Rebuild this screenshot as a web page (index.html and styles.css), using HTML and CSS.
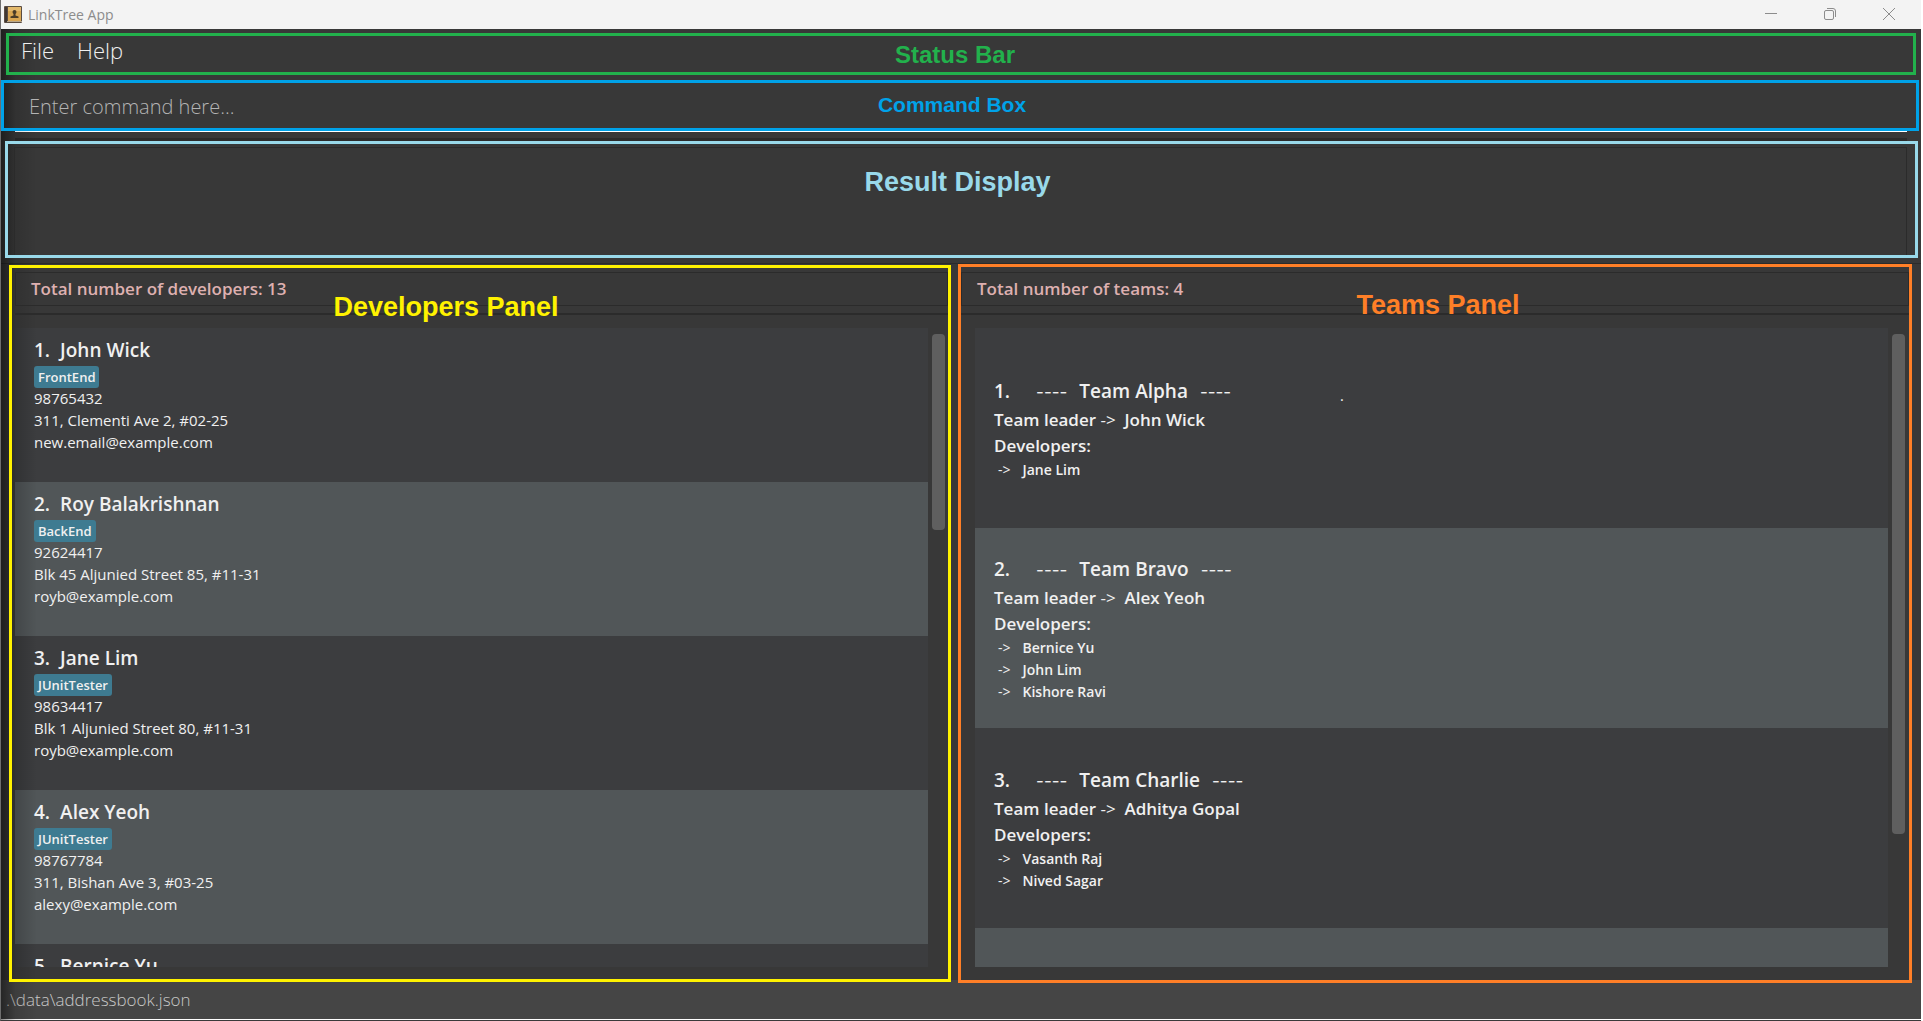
FILE: index.html
```html
<!DOCTYPE html>
<html lang="en">
<head>
<meta charset="utf-8">
<title>LinkTree App</title>
<link rel="stylesheet" href="styles.css">
</head>
<body>
<div class="window">
  <header class="titlebar">
    <svg class="app-icon" viewBox="0 0 18 17" aria-hidden="true">
      <rect x="0" y="0" width="18" height="17" rx="1" fill="#5a4c42"/>
      <rect x="1" y="1" width="2" height="15" fill="#3f3733"/>
      <rect x="4" y="1" width="13" height="14" fill="#d9a652"/>
      <rect x="4" y="1" width="13" height="4" fill="#e3b96c"/>
      <rect x="3" y="15" width="15" height="1" fill="#b9a88c"/>
      <circle cx="10.500" cy="6" r="2" fill="#4a3c28"/>
      <path d="M9.500 7h2v2.500l3 1V12h-8v-1.500l3-1z" fill="#4a3c28"/>
    </svg>
    <h1 class="app-title">LinkTree App</h1>
    <div class="window-controls">
      <button type="button" aria-label="Minimize"><svg viewBox="0 0 12 12"><path d="M0 5.500h12"/></svg></button>
      <button type="button" aria-label="Restore"><svg viewBox="0 0 12 12"><rect x=".5" y="2.500" width="9" height="9" rx="1.500"/><path d="M3 .5h6a2.500 2.500 0 0 1 2.500 2.500v6"/></svg></button>
      <button type="button" aria-label="Close"><svg viewBox="0 0 12 12"><path d="M0 0l12 12M12 0L0 12"/></svg></button>
    </div>
  </header>

  <nav class="region status-region">
    <button type="button" class="menu-item">File</button>
    <button type="button" class="menu-item">Help</button>
    <span class="caption">Status Bar</span>
  </nav>

  <section class="region command-region">
    <input class="command-input" type="text" placeholder="Enter command here..." aria-label="Command">
    <span class="caption">Command Box</span>
  </section>
  <div class="command-rule"></div>

  <section class="region result-region">
    <div class="result-display"></div>
    <span class="caption">Result Display</span>
  </section>

  <main class="panels">
    <section class="region developers-region">
      <div class="count"><h2>Total number of developers: 13</h2></div>
      <div class="scroll">
        <ol class="list">
          <li class="developer"><h3><span class="index">1.</span>John Wick</h3><span class="tag">FrontEnd</span><p>98765432</p><p>311, Clementi Ave 2, #02-25</p><p>new.email@example.com</p></li>
          <li class="developer"><h3><span class="index">2.</span>Roy Balakrishnan</h3><span class="tag">BackEnd</span><p>92624417</p><p>Blk 45 Aljunied Street 85, #11-31</p><p>royb@example.com</p></li>
          <li class="developer"><h3><span class="index">3.</span>Jane Lim</h3><span class="tag">JUnitTester</span><p>98634417</p><p>Blk 1 Aljunied Street 80, #11-31</p><p>royb@example.com</p></li>
          <li class="developer"><h3><span class="index">4.</span>Alex Yeoh</h3><span class="tag">JUnitTester</span><p>98767784</p><p>311, Bishan Ave 3, #03-25</p><p>alexy@example.com</p></li>
          <li class="developer"><h3><span class="index">5.</span>Bernice Yu</h3></li>
        </ol>
        <div class="scrollbar"><div class="thumb developers-thumb"></div></div>
      </div>
      <span class="caption">Developers Panel</span>
    </section>

    <section class="region teams-region">
      <div class="count"><h2>Total number of teams: 4</h2></div>
      <div class="scroll">
        <ol class="list">
          <li class="team"><h3><span class="index">1.</span><span class="dashes">----</span>Team Alpha<span class="dashes">----</span></h3>
            <h4>Team leader <span class="arrow">-&gt;</span>&nbsp; John Wick</h4><h4>Developers:</h4>
            <p><span class="arrow">-&gt;</span>Jane Lim</p><span class="dot">.</span></li>
          <li class="team"><h3><span class="index">2.</span><span class="dashes">----</span>Team Bravo<span class="dashes">----</span></h3>
            <h4>Team leader <span class="arrow">-&gt;</span>&nbsp; Alex Yeoh</h4><h4>Developers:</h4>
            <p><span class="arrow">-&gt;</span>Bernice Yu</p><p><span class="arrow">-&gt;</span>John Lim</p><p><span class="arrow">-&gt;</span>Kishore Ravi</p></li>
          <li class="team"><h3><span class="index">3.</span><span class="dashes">----</span>Team Charlie<span class="dashes">----</span></h3>
            <h4>Team leader <span class="arrow">-&gt;</span>&nbsp; Adhitya Gopal</h4><h4>Developers:</h4>
            <p><span class="arrow">-&gt;</span>Vasanth Raj</p><p><span class="arrow">-&gt;</span>Nived Sagar</p></li>
          <li class="team"></li>
        </ol>
        <div class="scrollbar"><div class="thumb teams-thumb"></div></div>
      </div>
      <span class="caption">Teams Panel</span>
    </section>
  </main>

  <footer class="footer">.\data\addressbook.json</footer>
</div>
</body>
</html>
```

FILE: styles.css
```css
* { box-sizing: border-box; }

body {
  margin: 0;
  background: #fff;
  font-family: "Open Sans", "Noto Sans", sans-serif;
  color: #f0f0f0;
}

h1, h2, h3, h4, p, ol { margin: 0; padding: 0; list-style: none; font-weight: 400; }

button { margin: 0; padding: 0; border: 0; background: none; font: inherit; color: inherit; }

.window {
  position: relative;
  display: flex;
  flex-direction: column;
  height: 100vh;
  margin-right: 2px;
  background: #383838;
  border-left: 1px solid #6e6e6e;
  border-bottom: 1px solid #3a3a3a;
  overflow: hidden;
}

/* shade along the left window edge */
.window::after {
  content: "";
  position: absolute;
  top: 29px;
  bottom: 0;
  left: 0;
  width: 36px;
  background: linear-gradient(to right, rgba(0, 0, 0, .45), rgba(0, 0, 0, .12) 40%, transparent);
  pointer-events: none;
}

.titlebar {
  display: flex;
  align-items: center;
  flex: none;
  height: 29px;
  padding-left: 3px;
  background: #f3f3f3;
  color: #8c8c8c;
}
.app-icon { width: 18px; height: 17px; }
.app-title { margin-left: 6px; font-size: 14px; line-height: 20px; }
.window-controls { display: flex; margin-right: 3px; margin-left: auto; }
.window-controls button { display: grid; place-items: center; width: 59px; height: 28px; padding-bottom: 1px; }
.window-controls svg { width: 12px; height: 12px; fill: none; stroke: #8c8c8c; overflow: visible; }

.region { position: relative; flex: none; border: 3px solid; z-index: 1; }
.caption {
  position: absolute;
  left: 0;
  right: 0;
  text-align: center;
  font: bold 27px/30px "Liberation Sans", Arial, sans-serif;
  pointer-events: none;
}

.status-region {
  display: flex;
  gap: 23px;
  height: 42px;
  margin: 4px 5px 0 5px;
  padding-left: 12px;
  border-color: #22b14c;
}
.menu-item { height: 28px; font-size: 22px; line-height: 28px; font-weight: 300; }
.status-region .caption { top: 4px; padding-right: 12px; font-size: 24px; color: #22b14c; }

.command-region { height: 51px; margin: 5px 2px 0 0; border-color: #00a2e8; }
.command-input {
  width: 100%;
  height: 45px;
  padding: 2px 25px 0;
  border: 0;
  background: none;
  color: #fff;
  font: 300 20px/28px "Open Sans", sans-serif;
}
.command-input::placeholder { color: #b4b4b4; opacity: 1; }
.command-region .caption { top: 7px; padding-right: 16px; font-size: 21px; color: #00a2e8; }
.command-rule {
  flex: none;
  height: 10px;
  margin: 0 14px;
  border-top: 1px solid #fff;
  box-shadow: 0 -3px #2b2b2b inset;
}

.result-region { height: 117px; margin: 0 3px 0 4px; padding: 3px 8px 0 6px; border-color: #99d9ea; }
.result-display { height: 108px; border: 1px solid #2b2b2b; border-bottom: 0; }
.result-region .caption { top: 23px; padding-right: 8px; color: #99d9ea; }

/* the panel frames reach slightly over the footer */
.panels {
  display: grid;
  grid-template-columns: 942fr 954fr;
  gap: 7px;
  flex: 1;
  min-height: 0;
  margin-top: 5px;
  margin-bottom: -3px;
  padding: 0 9px 0 8px;
  border-top: 1px solid #2b2b2b;
}
.panels .region { display: flex; flex-direction: column; min-width: 0; min-height: 0; }
.count {
  flex: none;
  height: 48px;
  padding-top: 5px;
  border-bottom: 2px solid #2b2b2b;
}
.count h2 {
  height: 34px;
  padding-left: 15px;
  border: 1px solid #2b2b2b;
  color: #deb0b0;
  font-size: 17px;
  line-height: 32px;
  font-weight: 600;
}
.scroll { display: flex; flex: 1; min-height: 0; margin: 13px 0 12px; }
.list { flex: 1; overflow: hidden; }
.list li { background-color: #3c3d3f; }
.list li:nth-child(even) { background-color: #515658; }
.scrollbar { padding: 6px 4px 0; }
.thumb { width: 13px; border-radius: 4px; background: #5f5f5f; }

.developers-region { border-color: #fff200; margin: 1px 0; }
.developers-region .count { height: 47px; padding-top: 4px; }
.developers-region .count, .developers-region .scroll { margin-left: 3px; }
.developers-region .scrollbar { padding-right: 3px; }
.developers-region .caption { top: 24px; padding-right: 68px; color: #fff200; }
.developers-thumb { height: 196px; }

.teams-region { border-color: #ff7f27; }
.teams-region .scroll { margin-left: 14px; margin-bottom: 13px; }
.teams-region .caption { top: 23px; padding-left: 6px; color: #ff7f27; }
.teams-thumb { height: 500px; }

.developer {
  height: 154px;
  padding: 10px 19px 0;
  background-image: linear-gradient(to right, rgba(0, 0, 0, .18), transparent 22px);
  font-size: 15px;
  line-height: 22px;
}
.developer h3, .team h3 { font-size: 19px; font-weight: 600; }
.developer h3 { height: 28px; line-height: 24px; }
.developer .index { margin-right: 10px; }
.tag {
  display: block;
  width: fit-content;
  margin-bottom: -1px;
  padding: 0 4px;
  border-radius: 3px;
  background: #3e7b91;
  font-size: 13px;
  line-height: 22px;
  font-weight: 600;
}

.team {
  position: relative;
  display: flex;
  flex-direction: column;
  justify-content: center;
  height: 200px;
  padding-left: 19px;
  font-size: 14px;
  line-height: 22px;
  font-weight: 600;
}
.team h3 { height: 32px; line-height: 32px; }
.team h4 { font-size: 17px; line-height: 26px; font-weight: 600; }
.team p { padding-left: 4px; font-weight: 600; }
.team p .arrow { margin-right: 12px; }
.team .index { margin-right: 26px; }
.arrow, .dashes { font-weight: 400; }
.dashes { font-family: Inter, sans-serif; font-size: 17px; line-height: 20px; }
.dashes:last-child { margin-left: 12px; }
.index + .dashes { margin-right: 12px; }
.dot { position: absolute; left: 40%; top: 59px; font-size: 12px; line-height: 20px; }

.footer {
  flex: none;
  height: 40px;
  padding-left: 5px;
  background: #454545;
  border-bottom: 1px solid #fff;
  color: #c8c8c8;
  font-size: 17px;
  line-height: 39px;
  font-weight: 300;
}
```
